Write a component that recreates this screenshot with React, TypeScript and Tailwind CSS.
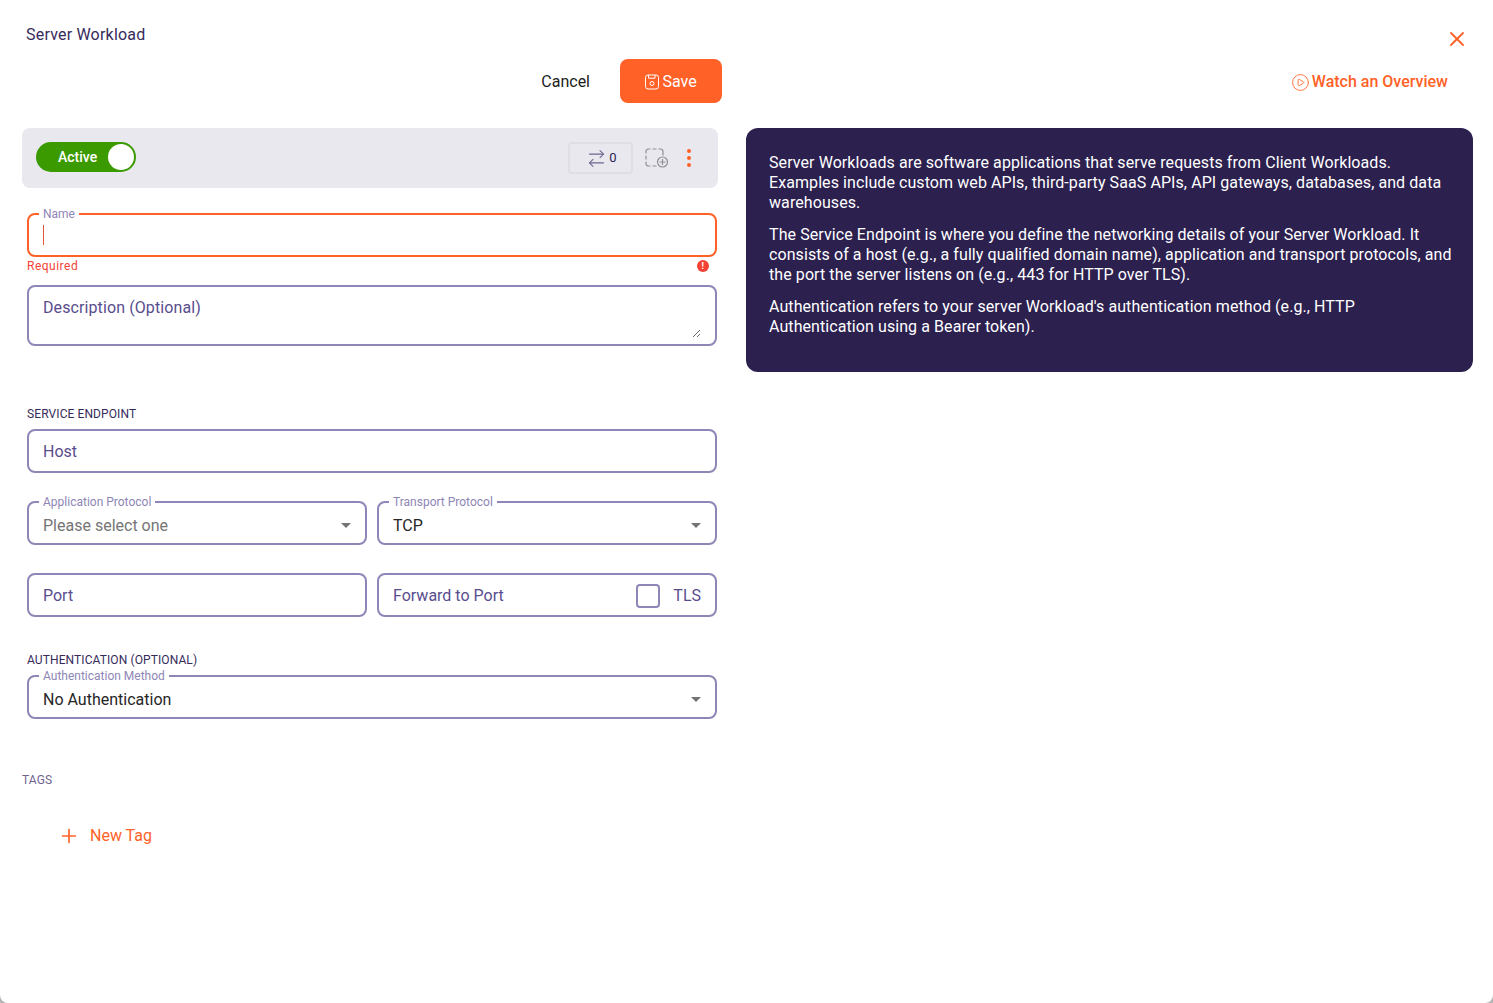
import React from "react";
import { ArrowRightLeft, CirclePlay, Plus, X } from "lucide-react";

const fieldBox = "h-11 w-full rounded-lg border-2 border-[#8e86b6] bg-white";

function FloatLabel({ text }: { text: string }) {
  return (
    <span className="absolute left-2.5 top-[-9px] bg-white px-1 text-xs leading-4 text-[#8e86b6]">{text}</span>
  );
}

function Caret() {
  return (
    <svg width="10" height="5" viewBox="0 0 10 5" className="mb-0.5 shrink-0">
      <path d="M0 0h10L5 5z" fill="#757575" />
    </svg>
  );
}

function TextField({ text, className }: { text: string; className?: string }) {
  return (
    <div className={`${fieldBox} flex items-center px-3.5 pt-0.5 text-base text-[#594d8e] ${className ?? ""}`}>
      {text}
    </div>
  );
}

function SelectField({ label, value, muted }: { label: string; value: string; muted?: boolean }) {
  return (
    <div className={`${fieldBox} relative flex items-center justify-between pl-3.5 pr-3.5 pt-1.5`}>
      <FloatLabel text={label} />
      <span className={`text-base ${muted ? "text-[#757575]" : "text-[#262626]"}`}>{value}</span>
      <Caret />
    </div>
  );
}

function SectionLabel({ text, className }: { text: string; className?: string }) {
  return <div className={`text-xs leading-4 tracking-[0.1px] ${className ?? ""}`}>{text}</div>;
}

function SaveIcon() {
  return (
    <svg width="14" height="16" viewBox="0 0 14 16" fill="none" stroke="currentColor" strokeWidth="1">
      <rect x="0.5" y="1" width="13" height="14" rx="2.5" />
      <path d="M3.5 1v3.2h6.5V1" />
      <circle cx="7" cy="9.5" r="2" />
    </svg>
  );
}

function AddGroupIcon() {
  return (
    <svg width="24" height="20" viewBox="0 0 24 20" fill="none" stroke="#8f8f97" strokeWidth="1.2">
      <path
        d="M1 5V3.500A2.500 2.500 0 0 1 3.500 1H5M8 1h3M14 1h1.500A2.500 2.500 0 0 1 18 3.500V7M1 8v3M1 14v1.500A2.500 2.500 0 0 0 3.500 18H5M8 18h3"
        strokeLinecap="round"
      />
      <circle cx="17.500" cy="14" r="5" fill="#e8e8ee" />
      <path d="M17.500 11v6M14.500 14h6" />
    </svg>
  );
}

export default function App() {
  return (
    <div className="h-[1003px] w-[1493px] overflow-hidden bg-[#b5b5b5] font-['Roboto',sans-serif]">
      <div className="flex h-full flex-col rounded-bl-lg rounded-br-lg bg-white pl-[22px] pr-5">
        <div className="flex h-[128px]">
          <div className="flex w-[700px] shrink-0 flex-col">
            <div className="pl-1 pt-[25px] text-base leading-[19px] tracking-[0.2px] text-[#362b5b]">
              Server Workload
            </div>
            <div className="mt-[15px] flex items-center justify-end">
              <button className="mr-[30px] pt-0.5 text-base text-[#1c1c1c]">Cancel</button>
              <button className="flex h-11 w-[102px] items-center justify-center gap-[3px] rounded-lg bg-[#ff6127] pt-0.5 text-base text-white">
                <SaveIcon />
                Save
              </button>
            </div>
          </div>
          <div className="flex flex-1 flex-col items-end">
            <button className="mr-1 mt-[27px] text-[#ff6127]">
              <X size={24} strokeWidth={1.8} />
            </button>
            <a className="mr-[25px] mt-[19px] flex items-center gap-0.5 text-base font-medium text-[#ff6127]">
              <CirclePlay size={19} strokeWidth={1.1} />
              Watch an Overview
            </a>
          </div>
        </div>

        <div className="flex gap-7">
          <div className="w-[696px] shrink-0">
            <div className="flex h-[60px] items-center justify-between rounded-lg bg-[#e8e8ee] pl-3.5 pr-[27px]">
              <div className="mb-0.5 flex h-[30px] w-[100px] items-center justify-between rounded-full bg-[#3b9a00] pl-[22px] pr-0.5">
                <span className="text-sm font-medium text-white">Active</span>
                <span className="h-[26px] w-[26px] rounded-full bg-white" />
              </div>
              <div className="flex items-center">
                <div className="flex h-8 w-[65px] items-center justify-center gap-0.5 rounded border-2 border-[#dedee7] pl-0.5 text-[13px] text-[#2e2455]">
                  <ArrowRightLeft size={21} strokeWidth={1.2} className="text-[#6f648f]" />
                  0
                </div>
                <span className="ml-3 flex">
                  <AddGroupIcon />
                </span>
                <span className="ml-[18px] flex flex-col gap-[3px]">
                  <span className="h-1 w-1 rounded-full bg-[#ff6127]" />
                  <span className="h-1 w-1 rounded-full bg-[#ff6127]" />
                  <span className="h-1 w-1 rounded-full bg-[#ff6127]" />
                </span>
              </div>
            </div>

            <div className="pl-[5px] pr-px">
              <div className="relative mt-[25px] flex h-11 w-full items-center rounded-lg border-2 border-[#ff6127] bg-white px-3.5">
                <FloatLabel text="Name" />
                <span className="h-5 w-px bg-[#e0563a]" />
              </div>
              <div className="flex h-[18px] items-center justify-between pr-2 text-xs tracking-[0.5px] text-[#f44336]">
                <span>Required</span>
                <span className="flex h-3 w-3 items-center justify-center rounded-full bg-[#f44336]">
                  <span className="text-[9px] font-bold leading-none text-white">!</span>
                </span>
              </div>
              <div className="mt-2.5 h-[61px] rounded-lg border-2 border-[#8e86b6] bg-white pb-1.5 pl-3.5 pr-3.5 pt-[11px]">
                <textarea
                  placeholder="Description (Optional)"
                  className="block h-10 w-full resize-y text-base leading-5 tracking-[0.1px] outline-none placeholder:text-[#594d8e]"
                />
              </div>

              <SectionLabel text="SERVICE ENDPOINT" className="mt-[60px] text-[#362b5b]" />
              <TextField text="Host" className="mt-[7px]" />

              <div className="mt-7 grid grid-cols-2 gap-2.5">
                <SelectField label="Application Protocol" value="Please select one" muted />
                <SelectField label="Transport Protocol" value="TCP" />
              </div>

              <div className="mt-7 grid grid-cols-2 gap-2.5">
                <TextField text="Port" />
                <div className={`${fieldBox} flex items-center justify-between px-3.5 pt-0.5 text-base text-[#594d8e]`}>
                  <span>Forward to Port</span>
                  <span className="flex items-center gap-[13px]">
                    <span className="h-6 w-6 rounded border-2 border-[#8e86b6]" />
                    TLS
                  </span>
                </div>
              </div>

              <SectionLabel text="AUTHENTICATION (OPTIONAL)" className="mt-[35px] text-[#362b5b]" />
              <div className="mt-[7px]">
                <SelectField label="Authentication Method" value="No Authentication" />
              </div>
            </div>

            <SectionLabel text="TAGS" className="mt-[53px] text-[#6f648f]" />
            <button className="ml-9 mt-9 flex items-center gap-2.5 text-base text-[#ff6127]">
              <Plus size={22} strokeWidth={1.8} />
              New Tag
            </button>
          </div>

          <div className="h-[244px] flex-1 rounded-xl bg-[#2c204f] pl-[23px] pr-3 pt-[25px] text-base leading-5 tracking-[0.08px] text-white">
            <p>
              Server Workloads are software applications that serve requests from Client Workloads. Examples include
              custom web APIs, third-party SaaS APIs, API gateways, databases, and data warehouses.
            </p>
            <p className="mt-3">
              The Service Endpoint is where you define the networking details of your Server Workload. It consists of a
              host (e.g., a fully qualified domain name), application and transport protocols, and the port the server
              listens on (e.g., 443 for HTTP over TLS).
            </p>
            <p className="mt-3">
              Authentication refers to your server Workload's authentication method (e.g., HTTP Authentication using a
              Bearer token).
            </p>
          </div>
        </div>
      </div>
    </div>
  );
}
